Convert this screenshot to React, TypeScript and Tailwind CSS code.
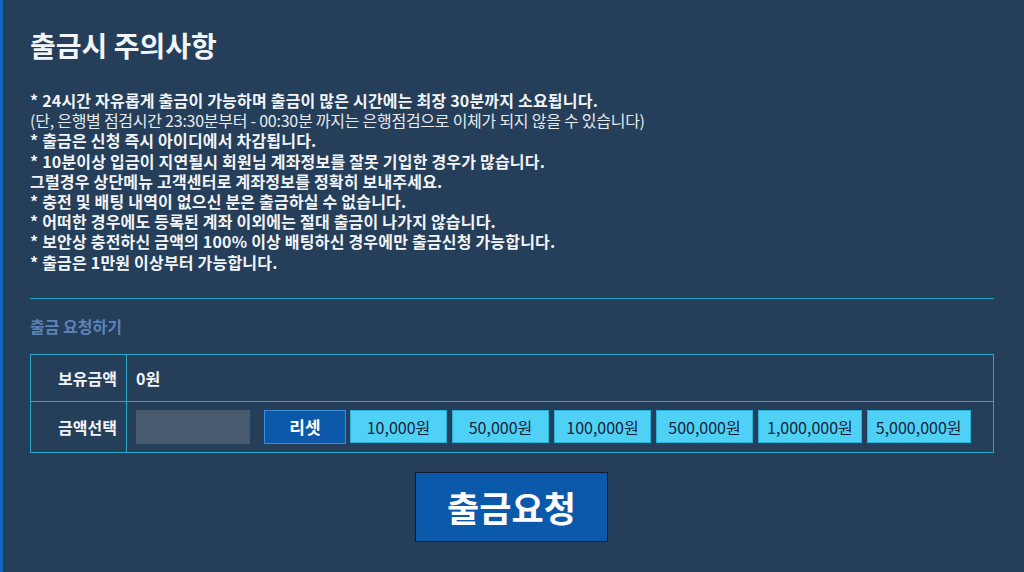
import React from 'react';

/* ────────────── Data ────────────── */
const notices: { text: string; light?: boolean }[] = [
  { text: '* 24시간 자유롭게 출금이 가능하며 출금이 많은 시간에는 최장 30분까지 소요됩니다.' },
  { text: '(단, 은행별 점검시간 23:30분부터 - 00:30분 까지는 은행점검으로 이체가 되지 않을 수 있습니다)', light: true },
  { text: '* 출금은 신청 즉시 아이디에서 차감됩니다.' },
  { text: '* 10분이상 입금이 지연될시 회원님 계좌정보를 잘못 기입한 경우가 많습니다.' },
  { text: '그럴경우 상단메뉴 고객센터로 계좌정보를 정확히 보내주세요.' },
  { text: '* 충전 및 배팅 내역이 없으신 분은 출금하실 수 없습니다.' },
  { text: '* 어떠한 경우에도 등록된 계좌 이외에는 절대 출금이 나가지 않습니다.' },
  { text: '* 보안상 충전하신 금액의 100% 이상 배팅하신 경우에만 출금신청 가능합니다.' },
  { text: '* 출금은 1만원 이상부터 가능합니다.' },
];

const amounts = ['10,000원', '50,000원', '100,000원', '500,000원', '1,000,000원', '5,000,000원'];

/* ────────────── Main Component ────────────── */
export default function App() {
  return (
    <div
      className="w-[1024px] h-[572px] overflow-hidden bg-[#253e59] border-l-[3px] border-[#1566c4] text-[#f2f5f8]"
      style={{ fontFamily: '"Noto Sans CJK KR", "Noto Sans", sans-serif' }}
    >
      <div className="pl-[27px] pr-[30px] pt-[27px]">
        {/* ── Title ── */}
        <h2 className="text-[28px] font-bold leading-[36px]">출금시 주의사항</h2>

        {/* ── Notices ── */}
        <div className="mt-[27px] text-[16px] leading-[20.2px]">
          {notices.map((n, i) => (
            <p key={i} className={n.light ? 'font-normal text-[#e6ebf0] tracking-[-0.25px]' : 'font-bold tracking-[0.2px]'}>{n.text}</p>
          ))}
        </div>

        <div className="mt-[26px] h-px bg-[#22a4c6]" />

        {/* ── Request ── */}
        <h4 className="mt-[17px] text-[16px] font-bold leading-[20px] text-[#5d83b8]">출금 요청하기</h4>

        <div className="mt-[18px] border border-[#2aa7c5] text-[16px] font-bold">
          <div className="flex h-[47px] border-b border-[#2aa7c5]">
            <div className="w-[96px] shrink-0 border-r border-[#2aa7c5] flex items-center justify-end pr-[9px]">보유금액</div>
            <div className="flex items-center pl-[9px]">0원</div>
          </div>
          <div className="flex h-[50px]">
            <div className="w-[96px] shrink-0 border-r border-[#2aa7c5] flex items-center justify-end pr-[9px]">금액선택</div>
            <div className="flex items-center pl-[9px]">
              <div className="w-[114px] h-[34px] bg-[#485a6d]" />
              <button className="ml-[14px] w-[82px] h-[34px] bg-[#0c59a9] border border-[#3d8ad6] text-white text-[17px] font-bold">리셋</button>
              <div className="flex gap-[5px] ml-[4px]">
                {amounts.map(a => (
                  <button key={a} className="min-w-[97px] h-[33px] px-[8px] bg-[#4fd1f6] border border-[#2bb2d8] text-[#16233a] text-[16px] font-normal">
                    {a}
                  </button>
                ))}
              </div>
            </div>
          </div>
        </div>

        {/* ── Submit ── */}
        <div className="flex justify-center mt-[19px]">
          <button className="ml-[-1px] w-[193px] h-[70px] bg-[#0b59ab] border border-[#0d1c33] text-white text-[35px] font-bold">
            출금요청
          </button>
        </div>
      </div>
    </div>
  );
}
